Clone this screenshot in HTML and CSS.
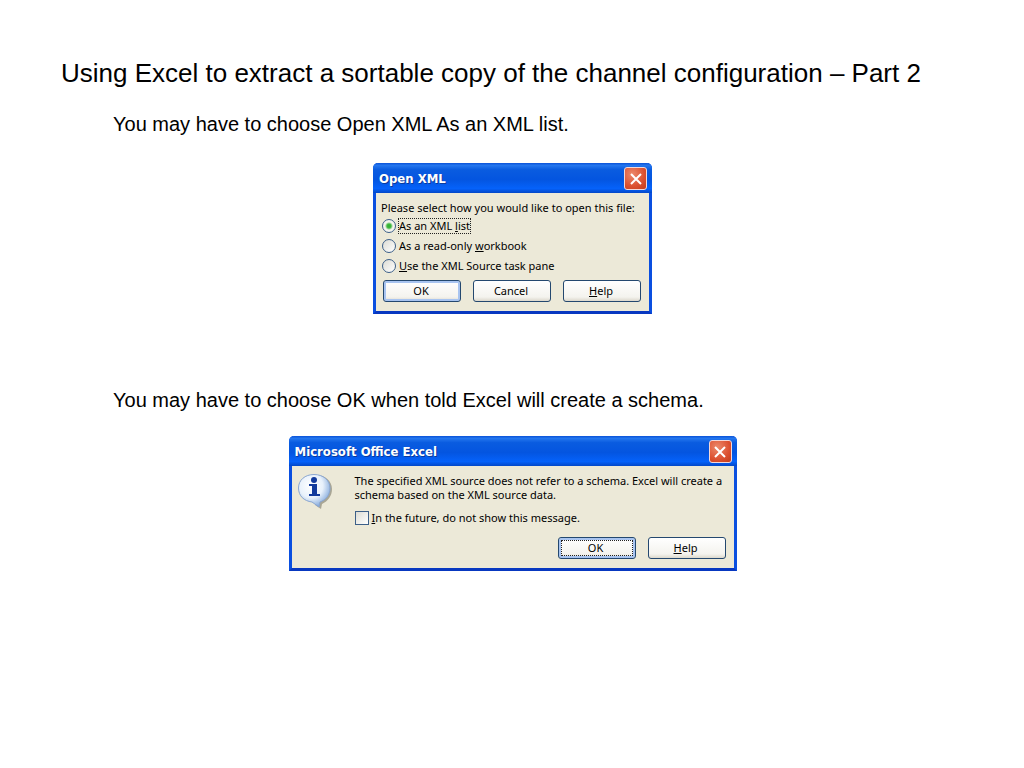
FILE: index.html
```html
<!DOCTYPE html>
<html lang="en">
  <head>
    <meta charset="utf-8" />
    <meta name="viewport" content="width=device-width, initial-scale=1.0" />
    <title>Using Excel to extract a sortable copy of the channel configuration</title>
    <link rel="stylesheet" href="styles.css">
  </head>
  <body>
    <main class="slide">
      <h1>Using Excel to extract a sortable copy of the channel configuration – Part 2</h1>

      <section class="step">
        <p class="step-text">You may have to choose Open XML As an XML list.</p>
        <form class="dialog dialog-open">
          <header class="title-bar">
            <h2>Open XML</h2>
            <button type="button" class="close" aria-label="Close">
              <svg viewBox="0 0 14 14" width="14" height="14"><path d="M2 2 L12 12 M12 2 L2 12" /></svg>
            </button>
          </header>
          <div class="dialog-body">
            <fieldset class="options">
              <legend>Please select how you would like to open this file:</legend>
              <label class="option">
                <input type="radio" name="open-as" checked />
                <span class="focused">As an XML <u>l</u>ist</span>
              </label>
              <label class="option">
                <input type="radio" name="open-as" />
                <span>As a read-only <u>w</u>orkbook</span>
              </label>
              <label class="option">
                <input type="radio" name="open-as" />
                <span><u>U</u>se the XML Source task pane</span>
              </label>
            </fieldset>
            <div class="buttons">
              <button type="button" class="btn btn-default">OK</button>
              <button type="button" class="btn">Cancel</button>
              <button type="button" class="btn"><span><u>H</u>elp</span></button>
            </div>
          </div>
        </form>
      </section>

      <section class="step step-schema">
        <p class="step-text">You may have to choose OK when told Excel will create a schema.</p>
        <form class="dialog dialog-schema">
          <header class="title-bar">
            <h2>Microsoft Office Excel</h2>
            <button type="button" class="close" aria-label="Close">
              <svg viewBox="0 0 14 14" width="14" height="14"><path d="M2 2 L12 12 M12 2 L2 12" /></svg>
            </button>
          </header>
          <div class="dialog-body">
            <div class="message">
              <svg class="info-icon" viewBox="0 0 36 36" width="36" height="36" aria-hidden="true">
                <defs>
                  <radialGradient id="bubble" cx="40%" cy="35%" r="68%">
                    <stop offset="0" stop-color="#ffffff" />
                    <stop offset="0.55" stop-color="#e8f1fb" />
                    <stop offset="1" stop-color="#7fa6da" />
                  </radialGradient>
                </defs>
                <path class="bubble-shadow" d="M18 1 C27 1 34 7 34 15 C34 22 30 27 24 30 L23 35 L17 31 Z" />
                <path class="bubble" d="M16 0.5 C25 0.5 32 6 32 14 C32 21 28 26 22 28 L21 33 L14 28 C6 27 0.5 22 0.5 14 C0.5 6 7 0.5 16 0.5 Z" fill="url(#bubble)" />
                <circle class="info-mark" cx="16" cy="6" r="3" />
                <path class="info-mark" d="M11 10 H19 V20 H22 V22 H11 V20 H14 V12 H11 Z" />
              </svg>
              <div class="message-text">
                <p>The specified XML source does not refer to a schema. Excel will create a schema based on the XML source data.</p>
                <label class="option">
                  <input type="checkbox" />
                  <span><u>I</u>n the future, do not show this message.</span>
                </label>
              </div>
            </div>
            <div class="buttons">
              <button type="button" class="btn btn-default btn-focused">OK</button>
              <button type="button" class="btn"><span><u>H</u>elp</span></button>
            </div>
          </div>
        </form>
      </section>
    </main>
  </body>
</html>
```
FILE: styles.css
```css
* {
  box-sizing: border-box;
}

body {
  margin: 0;
  background: #fff;
  color: #000;
  font-family: "Liberation Sans", Arial, sans-serif;
}

h1,
h2,
p {
  margin: 0;
  font-weight: normal;
}

.slide {
  padding: 57px 60px 57px 61px;
}

h1 {
  font-size: 26px;
  line-height: 32px;
}

.step {
  display: flex;
  flex-direction: column;
  align-items: center;
  gap: 27px;
  margin-top: 23px;
}

.step-schema {
  gap: 24px;
  margin-top: 74px;
}

.step-text {
  align-self: stretch;
  padding-left: 52px;
  font-size: 20px;
  line-height: 24px;
}

/* dialog windows */
.dialog {
  max-width: 100%;
  background: #ece9d8;
  border: 3px solid #0a4fe0;
  border-top: 0;
  border-bottom-color: #0838c0;
  border-radius: 5px 5px 0 0;
  font-family: "Noto Sans", Tahoma, sans-serif;
  font-size: 11px;
  line-height: 14px;
}

.dialog-open {
  width: 279px;
}

.dialog-schema {
  width: 448px;
}

.title-bar {
  display: flex;
  align-items: center;
  justify-content: space-between;
  height: 30px;
  margin: 0 -3px;
  padding: 1px 5px 0 6px;
  border-radius: 5px 5px 0 0;
  background: linear-gradient(#0a52d8 0, #2476ee 8%, #0a5ce0 22%, #0455e0 55%, #0562fa 85%, #0348c8 100%);
}

.title-bar h2 {
  color: #fff;
  font-family: "DejaVu Sans Condensed", "Trebuchet MS", sans-serif;
  font-size: 13px;
  font-weight: bold;
  text-shadow: 1px 1px 0 #0b3a9c;
}

.close {
  display: flex;
  align-items: center;
  justify-content: center;
  width: 23px;
  height: 23px;
  padding: 0;
  border: 1px solid #f4d8d8;
  border-radius: 3px;
  background: radial-gradient(circle at 35% 30%, #ec8a6c, #dc5030 60%, #c23c1c);
}

.close path {
  fill: none;
  stroke: #fff;
  stroke-width: 2;
}

.dialog-body {
  padding: 8px 8px 9px 5px;
}

.options {
  margin: 0;
  padding: 0;
  border: 0;
}

.options legend {
  padding: 0 0 1px;
}

.option {
  display: flex;
  align-items: center;
  gap: 3px;
  height: 20px;
}

.option input {
  appearance: none;
  flex: none;
  width: 14px;
  height: 14px;
  margin: 0;
  border: 1px solid #3c5f88;
  background: linear-gradient(135deg, #dcdcd4, #fff);
}

.option input[type="radio"] {
  border-radius: 50%;
}

.option input[type="radio"]:checked {
  background: radial-gradient(circle, #2eae2e 0, #3fb83f 2px, #f4f4ee 4px);
}

.options .option {
  padding-left: 1px;
}

.focused {
  outline: 1px dotted #222;
}

.buttons {
  display: flex;
  justify-content: flex-end;
  gap: 12px;
}

.dialog-open .buttons {
  margin-top: 4px;
}

.btn {
  width: 78px;
  height: 22px;
  padding: 0 2px 1px 0;
  border: 1px solid #24486f;
  border-radius: 3px;
  background: linear-gradient(#fff, #f4f3ee 80%, #dcd8cc);
  color: #000;
  font: inherit;
}

.btn-default {
  box-shadow: inset 0 0 0 2px #a8c4f0;
}

.btn-focused {
  outline: 1px dotted #222;
  outline-offset: -4px;
}

.message {
  display: flex;
  gap: 21px;
  padding-left: 1px;
}

.info-icon {
  flex: none;
}

.message-text {
  padding-bottom: 9px;
}

.message-text .option {
  margin-top: 6px;
}

.bubble {
  stroke: #8aa6d0;
}

.bubble-shadow {
  fill: #a9a695;
}

.info-mark {
  fill: #123a9c;
}
```
